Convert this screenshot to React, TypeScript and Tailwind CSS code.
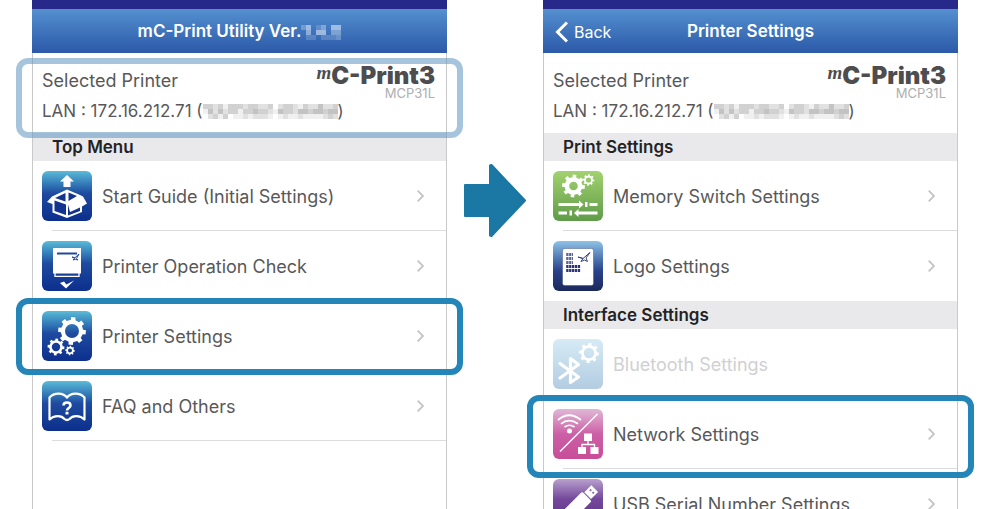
import type { ReactNode } from "react";

function gearPath(cx: number, cy: number, outer: number, body: number, hole: number, teeth = 8) {
  const step = (Math.PI * 2) / teeth;
  const at = (radius: number, angle: number) =>
    `${(cx + radius * Math.sin(angle)).toFixed(2)} ${(cy - radius * Math.cos(angle)).toFixed(2)}`;
  const points: string[] = [];
  for (let i = 0; i < teeth; i++) {
    const a = i * step + 0.1;
    points.push(at(body, a - step * 0.26), at(outer, a - step * 0.2), at(outer, a + step * 0.2), at(body, a + step * 0.26));
  }
  return `M${points.join("L")}ZM${cx - hole} ${cy}a${hole} ${hole} 0 1 0 ${hole * 2} 0a${hole} ${hole} 0 1 0 ${-hole * 2} 0Z`;
}

function Gear(props: { cx: number; cy: number; outer: number; body: number; hole: number }) {
  const { cx, cy, outer, body, hole } = props;
  return <path fillRule="evenodd" fill="#fff" d={gearPath(cx, cy, outer, body, hole)} />;
}

function Tile({ gradient, children }: { gradient: string; children: ReactNode }) {
  return (
    <span className={`block size-[50px] shrink-0 overflow-hidden rounded-md bg-linear-to-b ${gradient}`}>
      <svg viewBox="0 0 50 50" className="size-full" fill="none" aria-hidden="true">
        {children}
      </svg>
    </span>
  );
}

const blue = "from-[#5abbd8] via-[#1f4a9f] via-45% to-[#0c2f8c]";

const GuideIcon = () => (
  <Tile gradient={blue}>
    <path fill="#fff" d="M25 4l7 6.500h-3.500V16h-7v-5.500H18z" />
    <path fill="#fff" d="M25 18.500l13 5.500 3 1.500 4 7-5 3v5.500L25 47l-14.500-5.500V33L5 31l5-5.500z" />
    <path fill="#12348f" d="M26.500 21.500l8.500 3.500-8.500 5zM13 27L23.500 22v8.500zM12.500 29.500l11.500 4v10.500l-11.500-4zM26 33.500l2 7.500 10-4.500v3.500l-12 4.500z" />
  </Tile>
);

const CheckIcon = () => (
  <Tile gradient={blue}>
    <path fill="#fff" d="M11 7h28v25.500H11z" />
    <path stroke="#fff" strokeWidth="1.300" d="M13 32v3.300h24V32" />
    <path stroke="#23489a" strokeWidth="1.800" d="M15 12.500h20" />
    <path stroke="#23489a" strokeWidth="1" d="M30 16l3 .7L37 13l-2.500 4.500L36 19l-2.500-.7L31 19l1.500-1.800z" />
    <path fill="#fff" d="M18 42l4-1.500 2.500 3 7.500-4-8 8z" />
  </Tile>
);

const SettingsIcon = () => (
  <Tile gradient={blue}>
    <Gear cx={30} cy={20} outer={14} body={11.2} hole={7} />
    <Gear cx={14} cy={36} outer={8.5} body={6.8} hole={4.2} />
    <Gear cx={28} cy={39.5} outer={4.8} body={3.8} hole={2} />
  </Tile>
);

const FaqIcon = () => (
  <Tile gradient={blue}>
    <path
      stroke="#fff"
      strokeWidth="2.200"
      strokeLinejoin="round"
      d="M25 16.500C21.500 11.500 12 11 7.500 16.500v22c4.500-4.500 12-4.500 15-.5q2.500 2 5 0c3-4 10.500-4 15 .5v-22C38 11 28.500 11.500 25 16.500z"
    />
    <path stroke="#fff" strokeWidth="2.600" d="M21.500 24.500c0-4 7-4 7 0 0 2.500-3.500 2.500-3.500 5" />
    <path fill="#fff" d="M23.500 30.800h3v2.700h-3z" />
  </Tile>
);

const MemoryIcon = () => (
  <Tile gradient="from-[#a3d26f] to-[#5f9b49]">
    <Gear cx={20.5} cy={15} outer={11.5} body={8.9} hole={4.3} />
    <Gear cx={35.5} cy={9} outer={5.8} body={4.5} hole={2.6} />
    <path fill="#fff" d="M5.500 32H26v-2.500l4.500 4-4.500 4V35H5.500zM32 31h2.500v5H32zM36.500 32H44.500v3H36.500z" />
    <path fill="#fff" d="M44.500 40.500H25.500V38L21 42l4.500 4v-2.500h19zM16.500 39.500H19V44.500h-2.500zM5.500 40.500H14v3H5.500z" />
  </Tile>
);

const LogoIcon = () => (
  <Tile gradient="from-[#8fc3e6] via-[#29418c] via-60% to-[#1c2859]">
    <rect x="9.500" y="7.500" width="31" height="37" rx="2" fill="#fff" stroke="#20285d" strokeOpacity=".35" />
    {["110", "110", "110", "11111", "11111"].map((cells, row) => (
      <g key={row} fill={row < 3 ? "#5a669a" : "#29357a"}>
        {[...cells].map(
          (cell, col) =>
            (cell === "1" || row < 3) && <rect key={col} x={13.2 + col * 2.9} y={12 + row * 4} width={col === 2 && row < 3 ? 1 : 2.3} height="3" />,
        )}
      </g>
    ))}
    <path stroke="#37437f" strokeWidth="1" d="M25 16l5 1.500L37 11.500l-4 5.500 1.500 3.500-3-1.500-3.500 1.500 2-3z" />
  </Tile>
);

const BluetoothIcon = () => (
  <Tile gradient="from-[#d6ebf5] to-[#b3cce1]">
    <path stroke="#fff" strokeWidth="3.200" strokeLinejoin="round" strokeLinecap="round" d="M7 24.500L25.500 38 17.500 43.500V19.500l8 6L7 39" />
    <Gear cx={36} cy={14} outer={10} body={8} hole={5.2} />
  </Tile>
);

const NetworkIcon = () => (
  <Tile gradient="from-[#dfb7d6] via-[#cb5fa6] via-50% to-[#c84d98]">
    <path stroke="#fff" strokeWidth="1.500" d="M7 42.500L44.500 5" />
    <g stroke="#fff" strokeWidth="1.700">
      <path d="M5 11q11-9.500 23 0M8 14.800q8-6.500 17 0M11.500 18q5-3.500 10 0" />
    </g>
    <circle cx="16.500" cy="22" r="2.500" fill="#fff" />
    <path fill="#fff" d="M31 24.500h8V32h-8zM25 38h8v7h-8zM37.500 38h8v7h-8z" />
    <path stroke="#fff" strokeWidth="1.300" d="M35 32v3.500M29 38v-2.500h12.500V38" />
  </Tile>
);

const UsbIcon = () => (
  <Tile gradient="from-[#b9a0cd] via-[#74489a] via-40% to-[#5c2c85]">
    <g transform="rotate(45 38 13)" fill="#fff">
      <path fillRule="evenodd" d="M33.500 8h9.500v10h-9.500zM35.500 11v2h1.800v-2zM39.200 11v2H41v-2z" />
      <rect x="31.500" y="19" width="13.500" height="32" rx="2" />
    </g>
  </Tile>
);

const Arrow = () => (
  <svg viewBox="0 0 62 73" className="h-[73px] w-[62px]" aria-hidden="true">
    <path
      fill="#1b77a3"
      stroke="#1b77a3"
      strokeWidth="2"
      strokeLinejoin="round"
      d="M1 21h25V1.500l1.500-.5L61 36.500 27.500 72l-1.500-.5V52H1z"
    />
  </svg>
);

const Chevron = () => (
  <svg viewBox="0 0 7 12" className="h-3 w-[7px] shrink-0" fill="none" aria-hidden="true">
    <path stroke="#c4c4c8" strokeWidth="1.800" d="M.7.700L6 6 .7 11.300" />
  </svg>
);

function Mosaic({ rows, color, label }: { rows: string[]; color: string; label: string }) {
  const width = rows[0].length * 5;
  return (
    <svg viewBox={`0 0 ${width} 15`} width={width} height={15} role="img" aria-label={label} shapeRendering="crispEdges" className="shrink-0">
      {rows.flatMap((row, y) =>
        [...row].map((cell, x) => (
          <rect key={`${x}-${y}`} x={x * 5} y={y * 5} width="5" height="5" fill={color} fillOpacity={Number(cell) / 10} />
        )),
      )}
    </svg>
  );
}

const addressCells = [
  "332313332332230233213224223",
  "142423313343321433244344344",
  "023130112122210121121111232",
];
const versionCells = ["36024066", "05066044", "02202223"];

function Highlight({ className }: { className: string }) {
  return <span className={`pointer-events-none absolute -inset-x-[17px] z-10 border-6 ${className}`} />;
}

function SelectedPrinter({ highlighted = false }: { highlighted?: boolean }) {
  return (
    <section className="relative h-20 pt-3 pr-[11px] pl-[9px] text-[#58585a]">
      <div className="flex justify-between">
        <h2 className="text-lg leading-8">Selected Printer</h2>
        <div className="flex flex-col items-end">
          <div className="flex text-[#4d4d4f]">
            <span className="font-['Liberation_Serif',serif] text-[19px] leading-4 font-bold italic">m</span>
            <span className="text-2xl leading-[22px] font-black">C-Print3</span>
          </div>
          <span className="text-[13px] leading-3 text-[#aeaeb0]">MCP31L</span>
        </div>
      </div>
      <p className="flex items-center text-[17px] leading-6">
        LAN : 172.16.212.71 (
        <Mosaic rows={addressCells} color="#686868" label="Hidden address" />)
      </p>
      {highlighted && <Highlight className="top-[5px] -bottom-[5px] rounded-xl border-[#6699c2]/58" />}
    </section>
  );
}

function SectionTitle({ children }: { children: ReactNode }) {
  return (
    <h2 className="flex h-7 items-center bg-[#e9e9eb] px-[19px] pt-0.5 text-[17px] font-semibold text-[#232325]">{children}</h2>
  );
}

type RowProps = { icon: ReactNode; label: string; muted?: boolean; divider?: boolean; highlight?: string };

function Row({ icon, label, muted = false, divider = true, highlight }: RowProps) {
  return (
    <li className="relative">
      <button
        type="button"
        disabled={muted}
        className="flex h-[70px] w-full items-center gap-2.5 pr-[22px] pl-[9px] text-left"
      >
        {icon}
        <span className={`flex-1 pt-0.5 text-lg whitespace-nowrap ${muted ? "text-[#d0d0d2]" : "text-[#58585a]"}`}>{label}</span>
        {!muted && <Chevron />}
      </button>
      {divider && <span className="absolute right-0 bottom-0 left-[19px] h-px bg-[#dcdcde]" />}
      {highlight && <Highlight className={`rounded-xl border-[#2486b8] ${highlight}`} />}
    </li>
  );
}

function Phone({ title, back = false, children }: { title: ReactNode; back?: boolean; children: ReactNode }) {
  return (
    <div className="min-w-0 flex-1 border-x border-[#c9c9cb]">
      <div className="-mx-px h-[9px] bg-[#27298a]" />
      <header className="-mx-px grid h-11 grid-cols-[1fr_auto_1fr] items-center bg-linear-to-b from-[#5590cf] to-[#2c59a8] pt-0.5 text-white">
        <div className="pl-3">
          {back && (
            <button type="button" className="flex items-center gap-1.5 text-base">
              <svg viewBox="0 0 13 22" className="h-[22px] w-[13px]" fill="none" aria-hidden="true">
                <path stroke="#fff" strokeWidth="3" d="M12 1.500L2.500 11l9.500 9.500" />
              </svg>
              Back
            </button>
          )}
        </div>
        <h1 className="flex items-center text-[17px] font-semibold whitespace-nowrap">{title}</h1>
      </header>
      {children}
    </div>
  );
}

export default function App() {
  return (
    <main className="flex h-screen overflow-hidden bg-white pr-[42px] pl-8 font-['Inter','Liberation_Sans',sans-serif]">
      <Phone
        title={
          <>
            mC-Print Utility Ver.
            <Mosaic rows={versionCells} color="#dce8fa" label="Hidden version" />
          </>
        }
      >
        <SelectedPrinter highlighted />
        <SectionTitle>Top Menu</SectionTitle>
        <ul>
          <Row icon={<GuideIcon />} label="Start Guide (Initial Settings)" />
          <Row icon={<CheckIcon />} label="Printer Operation Check" divider={false} />
          <Row icon={<SettingsIcon />} label="Printer Settings" divider={false} highlight="-top-[3px] -bottom-[4px]" />
          <Row icon={<FaqIcon />} label="FAQ and Others" />
        </ul>
      </Phone>
      <div className="flex w-24 shrink-0 justify-center pt-[164px]">
        <Arrow />
      </div>
      <Phone title="Printer Settings" back>
        <SelectedPrinter />
        <SectionTitle>Print Settings</SectionTitle>
        <ul>
          <Row icon={<MemoryIcon />} label="Memory Switch Settings" />
          <Row icon={<LogoIcon />} label="Logo Settings" divider={false} />
        </ul>
        <SectionTitle>Interface Settings</SectionTitle>
        <ul>
          <Row icon={<BluetoothIcon />} label="Bluetooth Settings" muted divider={false} />
          <Row icon={<NetworkIcon />} label="Network Settings" highlight="-top-[4px] -bottom-[9px]" />
          <Row icon={<UsbIcon />} label="USB Serial Number Settings" />
        </ul>
      </Phone>
    </main>
  );
}
